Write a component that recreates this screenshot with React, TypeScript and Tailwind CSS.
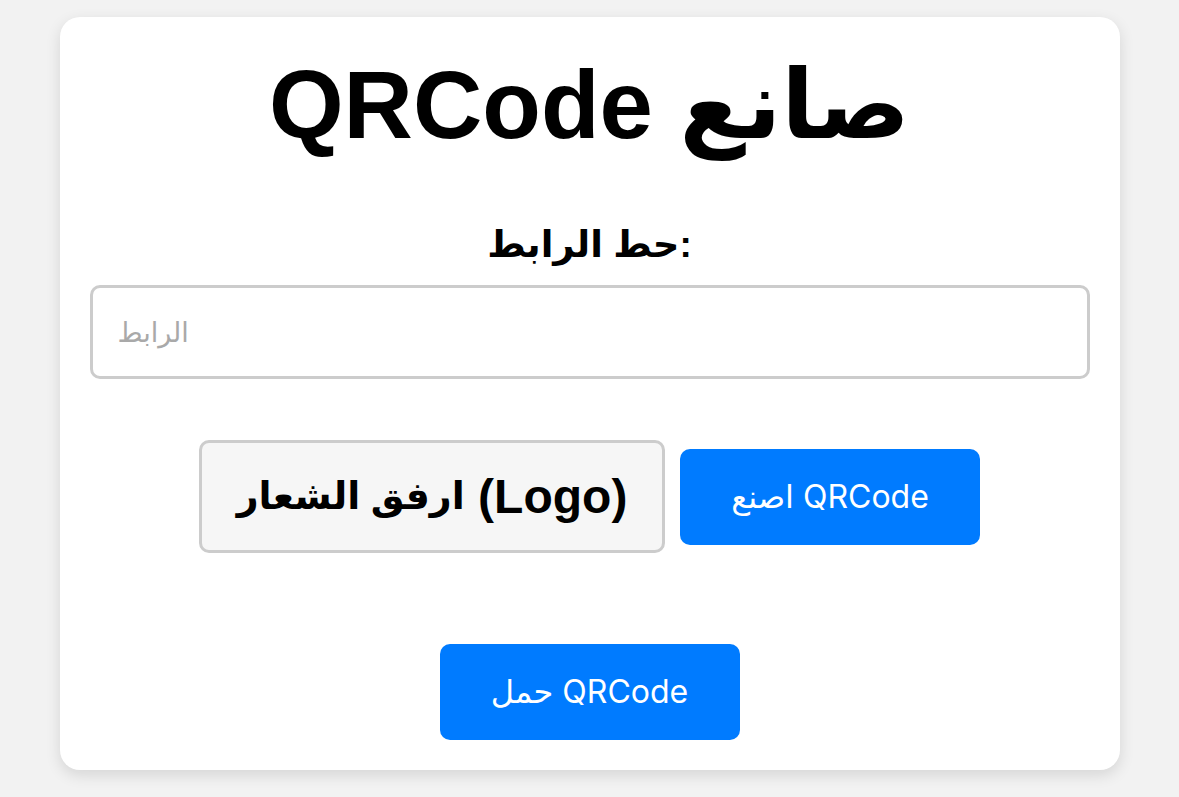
import React from 'react';

const App: React.FC = () => {
  return (
    <div className="min-h-screen bg-[#f2f2f2] pt-[17px] font-['Liberation_Sans','DejaVu_Sans',sans-serif]">
      <div className="mx-auto flex w-[1060px] flex-col items-center rounded-[20px] bg-white p-[30px] shadow-[0_5px_15px_rgba(0,0,0,0.12)]">
        <h1 dir="rtl" className="text-[96px] font-bold leading-[115px] text-black">
          صانع QRCode
        </h1>

        <label htmlFor="url" className="mt-[59px] text-[37px] font-bold leading-[48px] text-black">
          حط الرابط:
        </label>

        <input
          id="url"
          type="text"
          placeholder="الرابط"
          className="mt-[16px] h-[94px] w-full rounded-[10px] border-[3px] border-[#cccccc] px-[25px] font-['Inter','DejaVu_Sans',sans-serif] text-[27px] text-black outline-none placeholder:text-[#a9a9a9]"
        />

        <div className="mt-[61px] flex items-center gap-[15px]">
          <button className="flex h-[113px] w-[466px] items-center justify-center rounded-[10px] border-[3px] border-[#cccccc] bg-[#f6f6f6] text-[48px] font-bold text-black">
            <span className="text-[38px]">ارفق الشعار</span>&nbsp;(Logo)
          </button>
          <button className="flex h-[96px] w-[300px] items-center justify-center rounded-[10px] bg-[#007bff] font-['Inter','DejaVu_Sans',sans-serif] text-[32px] text-white">
            اصنع QRCode
          </button>
        </div>

        <button className="mt-[91px] flex h-[96px] w-[300px] items-center justify-center rounded-[10px] bg-[#007bff] font-['Inter','DejaVu_Sans',sans-serif] text-[32px] text-white">
          حمل QRCode
        </button>
      </div>
    </div>
  );
};

export default App;
